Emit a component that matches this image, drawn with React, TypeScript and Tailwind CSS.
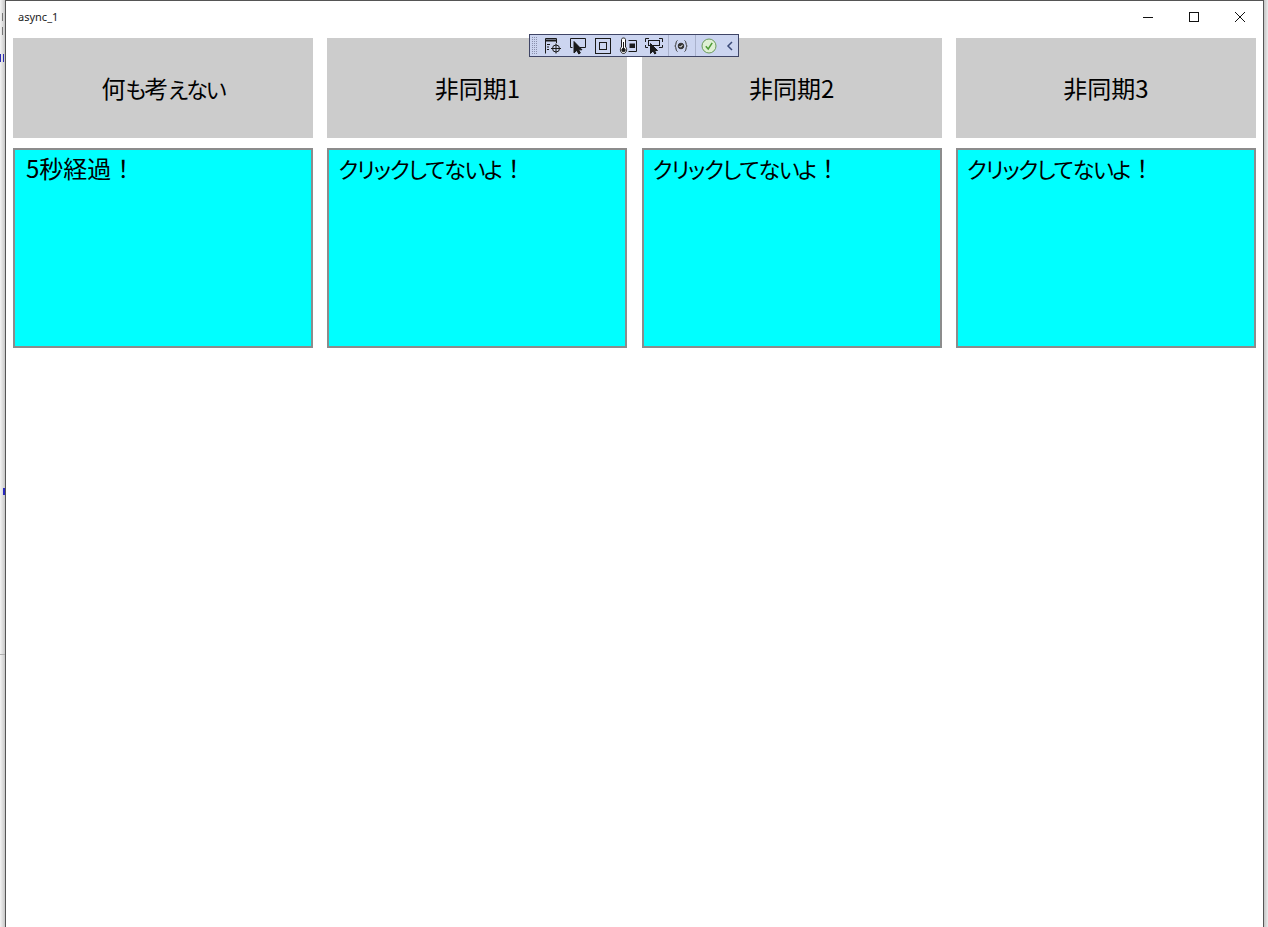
const FONT = "font-['Noto_Sans_CJK_JP','Noto_Sans',sans-serif]";
const KANA = "[font-feature-settings:'palt'] text-[22px] tracking-[-1.2px]";
const BUTTON_KANA = "[font-feature-settings:'palt'] text-[22px] tracking-[-2px]";

const columns = [
  { button: <>何<span className={BUTTON_KANA}>も</span>考<span className={BUTTON_KANA}>えない</span></>, key: "none", status: <span className="ml-px">5秒経過！</span> },
  { button: "非同期1", key: "a1", status: <><span className={`-ml-px ${KANA}`}>クリックしてないよ</span>！</> },
  { button: "非同期2", key: "a2", status: <><span className={`-ml-px ${KANA}`}>クリックしてないよ</span>！</> },
  { button: "非同期3", key: "a3", status: <><span className={`-ml-px ${KANA}`}>クリックしてないよ</span>！</> },
];

function Gripper() {
  return (
    <svg width="6" height="17" viewBox="0 0 6 17" fill="#8a90ad">
      {[0, 2, 4, 6, 8, 10, 12, 14, 16].map((y) => (
        <g key={y}>
          <rect x="0" y={y} width="1" height="1" />
          <rect x="2" y={y} width="1" height="1" />
          <rect x="4" y={y} width="1" height="1" />
        </g>
      ))}
    </svg>
  );
}

function LiveVisualTree() {
  return (
    <svg width="18" height="18" viewBox="0 0 18 18" fill="none" stroke="#1a1a1a" strokeWidth="1">
      <path d="M1.5 16.5V1.5H12.5V6" />
      <path d="M1.5 3.5H12.5" strokeWidth="2" />
      <path d="M3 7.5H6M3 10H5M3 12.5H5" />
      <circle cx="12" cy="11.5" r="3.5" />
      <path d="M12 6.5V16.5M7 11.5H17" />
    </svg>
  );
}

function SelectElement() {
  return (
    <svg width="18" height="18" viewBox="0 0 18 18" fill="none" stroke="#1a1a1a" strokeWidth="1">
      <path d="M3.5 10.5H1.5V1.5H16.5V10.5H11" />
      <path d="M5 4.5V16L7.8 13.4L9.8 17L11.4 16L9.6 12.8H13Z" fill="#1a1a1a" />
    </svg>
  );
}

function LayoutAdorner() {
  return (
    <svg width="18" height="18" viewBox="0 0 18 18" fill="none" stroke="#1a1a1a" strokeWidth="1">
      <rect x="1.5" y="1.5" width="15" height="15" />
      <rect x="5.5" y="5.5" width="7" height="7" />
    </svg>
  );
}

function Thermometer() {
  return (
    <svg width="18" height="18" viewBox="0 0 18 18" fill="none" stroke="#1a1a1a" strokeWidth="1">
      <path d="M2.5 10V2.5C2.5 0.5 6.5 0.5 6.5 2.5V10C8.7 11.5 7.5 16.5 4.5 16.5C1.5 16.5 0.3 11.5 2.5 10Z" fill="#ffffff" />
      <circle cx="4.5" cy="13" r="1.7" fill="#1a1a1a" />
      <path d="M4.5 5V12" />
      <path d="M9.5 3.5H17.5V14.5H9.5" />
      <rect x="11" y="7" width="4.5" height="3.5" fill="#1a1a1a" />
    </svg>
  );
}

function TrackElement() {
  return (
    <svg width="20" height="18" viewBox="0 0 20 18" fill="none" stroke="#1a1a1a" strokeWidth="1">
      <path d="M1.5 5V1.5H5M15 1.5H18.5V5M18.5 8V10.5H15M1.5 8V10.5H4" />
      <rect x="4.5" y="3.5" width="11" height="5" />
      <path d="M6.5 6.5V16.5L9 14L10.8 17L12 16.2L10.5 13.5H13.5Z" fill="#1a1a1a" />
    </svg>
  );
}

function BindingFailures() {
  return (
    <svg width="16" height="16" viewBox="0 0 16 16" fill="none" stroke="#333333" strokeWidth="1">
      <path d="M4.5 2.5C2.5 3 3.5 6.5 2 8C3.5 9.5 2.5 13 4.5 13.5" />
      <path d="M11.5 2.5C13.5 3 12.5 6.5 14 8C12.5 9.5 13.5 13 11.5 13.5" />
      <circle cx="8" cy="8" r="2.8" fill="#333333" />
      <path d="M6.5 8L7.6 9.2L9.6 6.8" stroke="#ffffff" />
    </svg>
  );
}

function HotReloadOk() {
  return (
    <svg width="16" height="16" viewBox="0 0 16 16" fill="none">
      <circle cx="8" cy="8" r="7" fill="#dff0d4" stroke="#6a9a5a" strokeWidth="1" />
      <path d="M4.8 8.2L7.2 11L11.2 4.8" stroke="#4d9a35" strokeWidth="1.5" />
    </svg>
  );
}

function Collapse() {
  return (
    <svg width="10" height="12" viewBox="0 0 10 12" fill="none" stroke="#3b4a78" strokeWidth="1.5">
      <path d="M7 2L3 6L7 10" />
    </svg>
  );
}

function DebugToolbar() {
  return (
    <div className="absolute left-[529px] top-[34px] flex h-[23px] w-[210px] items-center border border-[#3f4566] bg-[#ccd5f0]">
      <div className="ml-[2px] flex">
        <Gripper />
      </div>
      <div className="ml-[6px] flex items-center gap-[7px]">
        <LiveVisualTree />
        <SelectElement />
        <LayoutAdorner />
        <Thermometer />
        <TrackElement />
      </div>
      <div className="ml-[4px] h-[21px] w-px bg-[#aab2cc]" />
      <div className="ml-[3px] flex w-[18px] justify-center">
        <BindingFailures />
      </div>
      <div className="ml-[5px] h-[21px] w-px bg-[#aab2cc]" />
      <div className="ml-[5px] flex w-[16px] justify-center">
        <HotReloadOk />
      </div>
      <div className="ml-[8px] flex w-[10px] justify-center">
        <Collapse />
      </div>
    </div>
  );
}

function TitleBar() {
  return (
    <div className="flex h-[37px] items-start justify-between">
      <span className="ml-[12px] mt-[8px] font-['Noto_Sans','Liberation_Sans',sans-serif] text-[11px] leading-[16px] text-[#222222]">async_1</span>
      <div className="flex">
        <button className="flex h-[31px] w-[46px] items-center justify-center">
          <svg width="12" height="12" viewBox="0 0 12 12" fill="none" stroke="#111111">
            <path d="M1 6.5H11" />
          </svg>
        </button>
        <button className="flex h-[31px] w-[46px] items-center justify-center">
          <svg width="12" height="12" viewBox="0 0 12 12" fill="none" stroke="#111111">
            <rect x="1.5" y="1.5" width="9" height="9" />
          </svg>
        </button>
        <button className="flex h-[31px] w-[46px] items-center justify-center">
          <svg width="12" height="12" viewBox="0 0 12 12" fill="none" stroke="#111111">
            <path d="M1 1L11 11M11 1L1 11" />
          </svg>
        </button>
      </div>
    </div>
  );
}

// what shows of the window behind, only a few pixels of it
function BehindWindow() {
  return (
    <div className="relative w-[5px] shrink-0 overflow-hidden bg-[linear-gradient(to_right,#f4f4f4,#c8c8c8)]">
      <span className="absolute left-[2px] top-[13px] h-[8px] w-[1px] bg-[#777777]" />
      <span className="absolute left-[2px] top-[27px] h-[8px] w-[1px] bg-[#777777]" />
      <span className="absolute left-0 top-[54px] h-[8px] w-[1px] bg-[#2a2ab0]" />
      <span className="absolute left-[3px] top-[54px] h-[8px] w-[1px] bg-[#2a2ab0]" />
      <span className="absolute left-[3px] top-[488px] h-[7px] w-[2px] bg-[#2a2ac0]" />
      <span className="absolute left-0 top-[654px] h-px w-[5px] bg-[#b0b0b0]" />
    </div>
  );
}

export default function App() {
  return (
    <div className={`relative flex h-[927px] w-[1268px] overflow-hidden ${FONT}`}>
      <BehindWindow />
      <div className="flex h-full w-[1259px] shrink-0 flex-col border-x border-t border-[#555555] bg-white">
        <TitleBar />
        <div className="flex justify-between px-[7px]">
          {columns.map((col) => (
            <div key={col.key} className="flex w-[300px] flex-col gap-[10px]">
              <button className="flex h-[100px] w-full items-center justify-center bg-[#cccccc] text-[24px] text-black">
                {col.button}
              </button>
              <div className="h-[200px] border-2 border-[#8c8c8c] bg-[#00ffff] px-[10px] py-[2px] text-[24px] leading-[32px] text-black">
                {col.status}
              </div>
            </div>
          ))}
        </div>
      </div>
      <div className="w-[4px] shrink-0 bg-[linear-gradient(to_right,#c4c4c4,#ececec)]" />
      <DebugToolbar />
    </div>
  );
}
